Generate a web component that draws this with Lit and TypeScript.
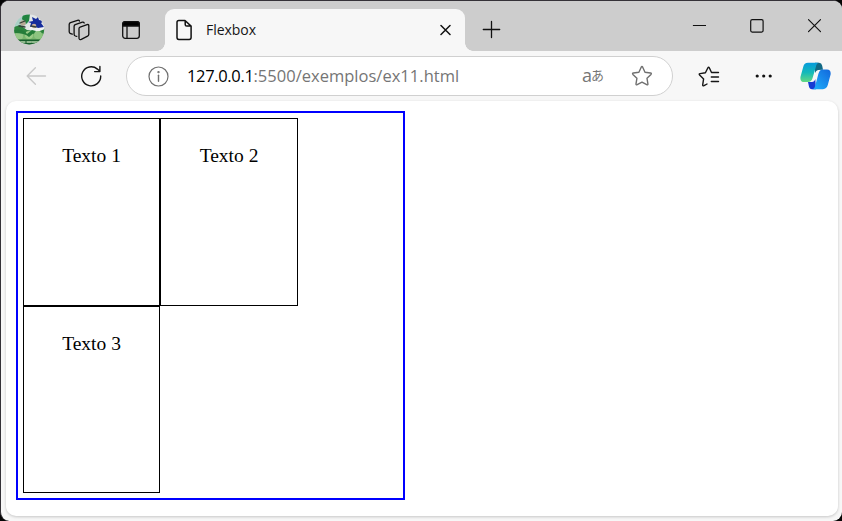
import { LitElement, html, css } from "lit";
import { customElement } from "lit/decorators.js";

@customElement("tab-strip")
class TabStrip extends LitElement {
  static styles = css`
    :host { display: flex; height: 50px; background: #cdcdcd; align-items: flex-start; }
    svg { display: block; flex: none; fill: none; stroke: #111; stroke-width: 1.3; stroke-linecap: round; stroke-linejoin: round; }
    .avatar { margin: 13px 0 0 13px; stroke: none; }
    .spaces { margin: 18px 0 0 23px; }
    .actions { margin: 19px 0 0 30px; }
    .tab { position: relative; flex: none; box-sizing: border-box; width: 300px; height: 42px; margin: 8px 0 0 24px; background: #f7f7f7; border-radius: 9px 9px 0 0; display: flex; align-items: center; padding: 0 14px 0 11px; }
    .tab::before, .tab::after { content: ""; position: absolute; bottom: 0; width: 8px; height: 8px; }
    .tab::before { left: -8px; background: radial-gradient(circle at 0 0, transparent 7.5px, #f7f7f7 8px); }
    .tab::after { right: -8px; background: radial-gradient(circle at 100% 0, transparent 7.5px, #f7f7f7 8px); }
    .title { font: 14px/20px "Open Sans", "Noto Sans", sans-serif; color: #161616; margin-left: 13px; letter-spacing: -0.05px; flex: 1; }
    .plus { margin: 19px 0 0 17px; }
    .window { display: flex; gap: 43px; margin: 17px 20px 0 auto; }
    .window svg { stroke-width: 1.2; }
  `;
  render() {
    return html`
      <svg class="avatar" width="31" height="31" viewBox="0 0 31 31">
        <defs><clipPath id="round"><circle cx="15.2" cy="15.5" r="15" /></clipPath></defs>
        <g clip-path="url(#round)">
          <rect width="31" height="31" fill="#e3e7e7" />
          <path d="M2 0h12v9l-7 5-7-1z" fill="#a9cfc4" />
          <path d="M9 0h7l-1 7-3 3-4-5z" fill="#218440" />
          <path d="M0 13l6-2 7 5 7 1 11-3v6H0z" fill="#2c833d" />
          <path d="M16 13h8l7-2v4l-8 3-8-3z" fill="#f1f3f3" />
          <path d="M14 8l5-1-1-4 4 2 2-2 1 3 5 1-3 2 3 4-6 1-4-2-4 1 1-4z" fill="#162d9b" />
          <circle cx="9" cy="9" r="2.7" fill="#b8a895" /><circle cx="20" cy="12" r="2.3" fill="#cbb09c" />
          <path d="M6 9l5-2M5 12l6 1M17 12l5 1" stroke="#34423a" />
          <path d="M0 18q6-2 11 2 5-3 9 0 6-2 12 0v11H0z" fill="#79b76d" />
          <circle cx="5" cy="22" r="4" fill="#96c687" /><circle cx="15" cy="21" r="4" fill="#9bcb87" /><circle cx="24" cy="21" r="4" fill="#8dc480" />
          <path d="M0 16q9-2 13 4l5-4 4 1-7 6q-4-4-15-4z" fill="#257d39" />
          <path d="M0 25.5h31V31H0z" fill="#175d2c" />
          <path d="M6 28h5m2 0h4m1 0h6" stroke="#b8d6ad" />
        </g>
      </svg>
      <svg class="spaces" width="23" height="22" viewBox="0 0 23 22">
        <path d="M11 9.6q.1-1.1 1.1-1.5l7-2.5q1.6-.4 1.7 1v8.8q-.1 1.2-1.2 1.8l-6.3 3.1q-2.1.9-2.3-1z" />
        <path d="M8.8 17.4l-1.4-.4q-1.3-.5-1.3-1.8V7.4q.1-1.4 1.1-1.8l7.2-2.5q1.3-.3 1.8.9" />
        <path d="M4.3 15.2l-1.7-.6q-1.4-.5-1.4-1.8V5.4q.1-1.4 1.3-1.8l7-2.3q1.5-.4 2 .8" />
      </svg>
      <svg class="actions" width="20" height="20" viewBox="0 0 20 20">
        <rect x="1.7" y="1.7" width="16.6" height="16.6" rx="2.5" />
        <path d="M1.7 6V4q.1-2.3 2.4-2.3h11.8q2.4 0 2.4 2.3v2z" fill="#000" /><path d="M6 6v12.3" />
      </svg>
      <div class="tab">
        <svg width="17" height="22" viewBox="0 0 17 22"><path d="M2.3 1.5h6.2l6.1 5.6v11.5q0 1.8-1.8 1.8H2.3q-1.8 0-1.8-1.8V3.3q0-1.8 1.8-1.8zM8.7 1.7v3.8q0 1.6 1.6 1.6h4.2" stroke-width="1.5" transform="translate(.5 0)" /></svg>
        <span class="title">Flexbox</span>
        <svg width="11" height="12" viewBox="0 0 11 12"><path d="M1 1.5l9 9M10 1.5l-9 9" stroke-width="1.5" /></svg>
      </div>
      <svg class="plus" width="19" height="19" viewBox="0 0 19 19"><path d="M9.5 1.5v16M1.3 9.5h16.4" /></svg>
      <div class="window">
        <svg width="15" height="16" viewBox="0 0 15 16"><path d="M2.5 7.5h12" stroke-linecap="square" /></svg>
        <svg width="15" height="16" viewBox="0 0 15 16"><rect x="1.7" y="1.7" width="12.4" height="12.4" rx="1.5" /></svg>
        <svg width="15" height="16" viewBox="0 0 15 16"><path d="M1.5 1.7l12 12M13.5 1.7l-12 12" /></svg>
      </div>`;
  }
}

@customElement("nav-bar")
class NavBar extends LitElement {
  static styles = css`
    :host { display: flex; height: 50px; align-items: center; background: #f7f7f7; }
    svg { display: block; flex: none; fill: none; stroke: #151515; stroke-width: 1.4; stroke-linecap: round; stroke-linejoin: round; }
    .back { margin-left: 24px; stroke: #c9c9c9; }
    .reload { margin-left: 33px; }
    .address { box-sizing: border-box; width: 547px; height: 40px; flex: none; margin-left: 24px; border: 1.5px solid #d0d0d0; border-radius: 20px; background: #fff; display: flex; align-items: center; padding: 0 19px 0 21px; }
    .address svg { stroke: #707070; }
    .url { font: 16.5px/24px "Open Sans", "Noto Sans", sans-serif; margin-left: 18px; color: #757575; white-space: nowrap; letter-spacing: 0.02px; flex: 1; }
    .host { color: #000; letter-spacing: -0.35px; }
    .language { display: flex; align-items: center; color: #767676; font: 18px/22px "Open Sans", sans-serif; margin: 0 27px 2px 0; }
    .kana { font: 13px/18px "Noto Sans CJK JP", sans-serif; margin-left: -1px; }
    .favorites { margin-left: 25px; }
    .more { margin-left: 33px; fill: #111; stroke: none; }
    .copilot { margin-left: 26px; stroke: none; }
  `;
  render() {
    return html`
      <svg class="back" width="22" height="20" viewBox="0 0 22 20"><path d="M10.4 1.8L2.2 10l8.2 8.2M2.5 10h18" /></svg>
      <svg class="reload" width="22" height="22" viewBox="0 0 22 22"><path d="M20.7 11A9.5 9.5 0 1 1 17.4 4.1L19.8 6.3M19.9 1.4v5.2h-5.3" /></svg>
      <div class="address">
        <svg width="21" height="21" viewBox="0 0 21 21"><circle cx="10.5" cy="10.5" r="9.5" stroke-width="1.2" /><path d="M10.5 9.2v6" /><circle cx="10.5" cy="6.1" r=".5" /></svg>
        <div class="url"><span class="host">127.0.0.1</span>:5500/exemplos/ex11.html</div>
        <div class="language"><span>a</span><span class="kana">あ</span></div>
        <svg width="22" height="22" viewBox="0 0 22 22"><path d="M10.2 2.2q.8-1.3 1.5 0l2.3 5 5.5.8q1.4.3.5 1.4l-4 3.9.9 5.5q.2 1.5-1.2.9L11 17.2l-4.8 2.5q-1.3.6-1.2-.9l.9-5.5-4-3.9q-.9-1.1.5-1.4l5.5-.8z" /></svg>
      </div>
      <svg class="favorites" width="23" height="22" viewBox="0 0 23 22"><path d="M9 19l-3 1.7q-1.4.6-1.3-.9l.9-5.9L1.6 10q-1-1.1.5-1.4l5.3-.8 2.5-5q.7-1.3 1.4 0l2.2 4.7h7M13.3 12h7.2M13.3 16.5h7.2" /></svg>
      <svg class="more" width="20" height="6" viewBox="0 0 20 6"><circle cx="3.2" cy="3" r="1.6" /><circle cx="9.7" cy="3" r="1.6" /><circle cx="16.2" cy="3" r="1.6" /></svg>
      <svg class="copilot" width="31" height="28" viewBox="0 0 31 28">
        <defs>
          <linearGradient id="left" x1="0" y1="0" x2="0" y2="1"><stop stop-color="#079bdc" /><stop offset=".5" stop-color="#13b9ba" /><stop offset="1" stop-color="#65d981" /></linearGradient>
          <linearGradient id="right" x1="1" y1="0" x2="0" y2="1"><stop stop-color="#1267dc" /><stop offset="1" stop-color="#20b2fc" /></linearGradient>
        </defs>
        <path d="M15 .8h4q2.7.2 3.2 3l.8 4-5 .3q-2 .4-3 3z" fill="#126985" />
        <path d="M16 27.2h-4q-2.5 0-3.1-3L8 20h4q2.4 0 3.3-3z" fill="#163bd4" />
        <path d="M8 .8h11q-2.4.3-3.1 3.9L12.6 16q-1.1 4.1-4.6 4.1H4.5Q-.3 20 .5 14.8L3.2 5Q4.2.8 8 .8z" fill="url(#left)" />
        <path d="M23 27.2H12q2.4 0 3.3-3.8l3.1-11.6q1.1-4.3 4.5-4.3H27q4.2.3 3.6 5.1l-2.8 10.5q-1.2 4.1-4.8 4.1z" fill="url(#right)" />
      </svg>`;
  }
}

@customElement("app-root")
class AppRoot extends LitElement {
  static styles = css`
    :host { display: block; width: 842px; height: 521px; background: #050505; overflow: hidden; }
    .browser { box-sizing: border-box; height: 521px; border-top: 1px solid #353238; border-left: 1px solid #353238; border-radius: 9px; background: #f7f7f7; overflow: hidden; }
    .viewport { box-sizing: border-box; width: 832px; height: 415px; margin-left: 5px; padding: 10px; border-radius: 10px; background: #fff; box-shadow: 0 1px 3px #0003; }
    .container { box-sizing: border-box; width: 389px; height: 389px; border: 2px solid #00f; padding: 5px; display: grid; grid-template-columns: 137px 138px; grid-template-rows: 188px 187px; }
    .item { box-sizing: border-box; border: 1px solid #000; padding-top: 26px; text-align: center; color: #000; font: 19.5px/22px "Liberation Serif", serif; }
  `;
  render() {
    return html`
      <div class="browser">
        <tab-strip></tab-strip>
        <nav-bar></nav-bar>
        <main class="viewport">
          <div class="container">
            ${[1, 2, 3].map((n) => html`<div class="item">Texto ${n}</div>`)}
          </div>
        </main>
      </div>`;
  }
}
